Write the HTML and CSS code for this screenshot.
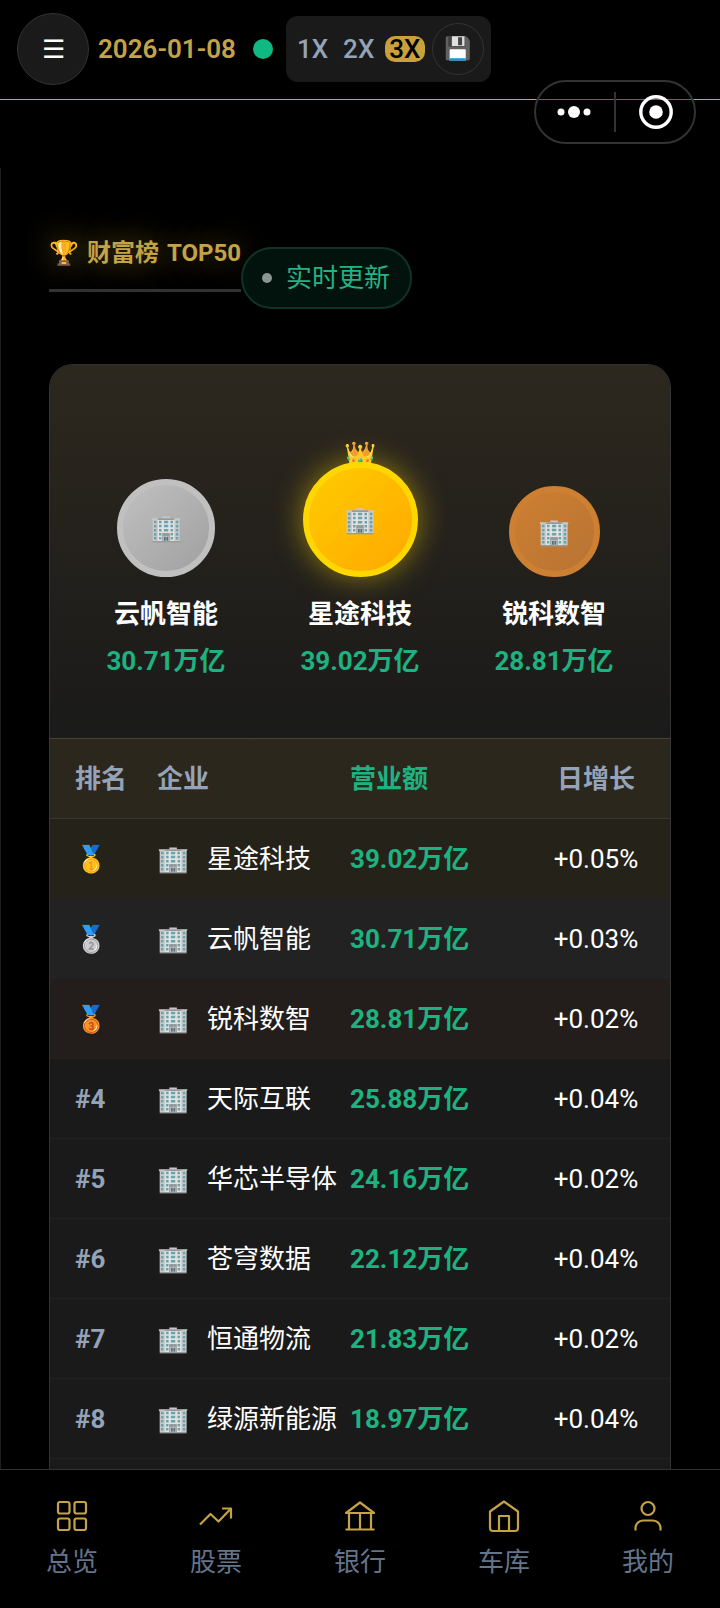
FILE: index.html
```
<!DOCTYPE html>
<html lang="zh-CN">
<head>
    <meta charset="UTF-8">
    <meta name="viewport" content="width=device-width, initial-scale=1.0">
    <title>财富榜 TOP50</title>
    <link rel="stylesheet" href="styles.css">
</head>
<body>
    <header class="topbar">
        <button class="menu-btn" type="button" aria-label="菜单">☰</button>
        <span class="date">2026-01-08</span>
        <span class="status-dot"></span>
        <div class="speed">
            <button class="speed-btn" type="button">1X</button>
            <button class="speed-btn" type="button">2X</button>
            <button class="speed-btn active" type="button">3X</button>
            <button class="save-btn" type="button" aria-label="保存">💾</button>
        </div>
        <div class="capsule">
            <button class="capsule-btn" type="button" aria-label="更多">
                <svg width="40" height="40" viewBox="0 0 40 40" fill="#fff">
                    <circle cx="6" cy="20" r="3.5"/>
                    <circle cx="19" cy="20" r="6"/>
                    <circle cx="32" cy="20" r="3.5"/>
                </svg>
            </button>
            <button class="capsule-btn" type="button" aria-label="关闭">
                <svg width="40" height="40" viewBox="0 0 40 40">
                    <circle cx="21" cy="20" r="15.2" fill="none" stroke="#fff" stroke-width="3.4"/>
                    <circle cx="21" cy="20" r="6.8" fill="#fff"/>
                </svg>
            </button>
        </div>
    </header>

    <main class="content">
        <div class="title-row">
            <h1 class="title"><span>🏆</span> <span>财富榜</span> <span>TOP50</span></h1>
            <span class="live"><span class="live-dot"></span>实时更新</span>
        </div>

        <section class="card">
            <div class="podium">
                <div class="place">
                    <div class="coin silver">🏢</div>
                    <div class="place-name">云帆智能</div>
                    <div class="place-value">30.71万亿</div>
                </div>
                <div class="place">
                    <div class="first-coin">
                        <span class="crown">👑</span>
                        <div class="coin gold">🏢</div>
                    </div>
                    <div class="place-name">星途科技</div>
                    <div class="place-value">39.02万亿</div>
                </div>
                <div class="place">
                    <div class="coin bronze">🏢</div>
                    <div class="place-name">锐科数智</div>
                    <div class="place-value">28.81万亿</div>
                </div>
            </div>

            <table class="rank-table">
                <thead>
                    <tr>
                        <th class="col-rank">排名</th>
                        <th class="col-company">企业</th>
                        <th class="col-revenue">营业额</th>
                        <th class="col-growth">日增长</th>
                    </tr>
                </thead>
                <tbody>
                    <tr class="row-gold">
                        <td class="col-rank">🥇</td>
                        <td><span class="company"><span>🏢</span>星途科技</span></td>
                        <td class="col-revenue">39.02万亿</td>
                        <td class="col-growth">+0.05%</td>
                    </tr>
                    <tr class="row-silver">
                        <td class="col-rank">🥈</td>
                        <td><span class="company"><span>🏢</span>云帆智能</span></td>
                        <td class="col-revenue">30.71万亿</td>
                        <td class="col-growth">+0.03%</td>
                    </tr>
                    <tr class="row-bronze">
                        <td class="col-rank">🥉</td>
                        <td><span class="company"><span>🏢</span>锐科数智</span></td>
                        <td class="col-revenue">28.81万亿</td>
                        <td class="col-growth">+0.02%</td>
                    </tr>
                    <tr>
                        <td class="col-rank">#4</td>
                        <td><span class="company"><span>🏢</span>天际互联</span></td>
                        <td class="col-revenue">25.88万亿</td>
                        <td class="col-growth">+0.04%</td>
                    </tr>
                    <tr>
                        <td class="col-rank">#5</td>
                        <td><span class="company"><span>🏢</span>华芯半导体</span></td>
                        <td class="col-revenue">24.16万亿</td>
                        <td class="col-growth">+0.02%</td>
                    </tr>
                    <tr>
                        <td class="col-rank">#6</td>
                        <td><span class="company"><span>🏢</span>苍穹数据</span></td>
                        <td class="col-revenue">22.12万亿</td>
                        <td class="col-growth">+0.04%</td>
                    </tr>
                    <tr>
                        <td class="col-rank">#7</td>
                        <td><span class="company"><span>🏢</span>恒通物流</span></td>
                        <td class="col-revenue">21.83万亿</td>
                        <td class="col-growth">+0.02%</td>
                    </tr>
                    <tr>
                        <td class="col-rank">#8</td>
                        <td><span class="company"><span>🏢</span>绿源新能源</span></td>
                        <td class="col-revenue">18.97万亿</td>
                        <td class="col-growth">+0.04%</td>
                    </tr>
                </tbody>
            </table>
        </section>
    </main>

    <nav class="tabbar">
        <a class="tab" href="#overview">
            <svg class="tab-icon" viewBox="0 0 40 40">
                <rect x="6" y="6" width="11.5" height="11.5" rx="2"/>
                <rect x="22.5" y="6" width="11.5" height="11.5" rx="2"/>
                <rect x="6" y="22.5" width="11.5" height="11.5" rx="2"/>
                <rect x="22.5" y="22.5" width="11.5" height="11.5" rx="2"/>
            </svg>
            总览
        </a>
        <a class="tab" href="#stock">
            <svg class="tab-icon" viewBox="0 0 40 40">
                <path d="M4 28.5L14.5 18L22.5 25.5L35 12.5"/>
                <path d="M26 12.5H35V22.5"/>
            </svg>
            股票
        </a>
        <a class="tab" href="#bank">
            <svg class="tab-icon" viewBox="0 0 40 40">
                <path d="M6 17L20 6.5L34 17Z"/>
                <path d="M9 17V33.5M20 17V33.5M31 17V33.5M5.5 33.5H34.5"/>
            </svg>
            银行
        </a>
        <a class="tab" href="#garage">
            <svg class="tab-icon" viewBox="0 0 40 40">
                <path d="M6 15.5L20 5.5L34 15.5V32Q34 35 31 35H9Q6 35 6 32Z"/>
                <path d="M15 35V20H25V35"/>
            </svg>
            车库
        </a>
        <a class="tab" href="#mine">
            <svg class="tab-icon" viewBox="0 0 40 40">
                <circle cx="20" cy="12.5" r="6.5"/>
                <path d="M7.5 34.5V32A7.5 7.5 0 0 1 15 24.5H25A7.5 7.5 0 0 1 32.5 32V34.5"/>
            </svg>
            我的
        </a>
    </nav>
</body>
</html>
```
FILE: styles.css
```
* {
    box-sizing: border-box;
}
body {
    margin: 0;
    height: 100vh;
    display: flex;
    flex-direction: column;
    overflow: hidden;
    background: #000;
    color: #fff;
    font-family: Roboto, "Noto Sans CJK SC", sans-serif;
    font-size: 26px;
    line-height: 36px;
}
button {
    padding: 0;
    border: none;
    background: none;
    color: inherit;
    font: inherit;
}

/* top bar */
.topbar {
    position: relative;
    display: flex;
    align-items: center;
    height: 100px;
    padding: 0 17px 2px;
    border-bottom: 1px solid #c9ad4c;
    flex-shrink: 0;
}
.menu-btn {
    width: 72px;
    height: 72px;
    border: 1px solid #333;
    border-radius: 50%;
    background: #1a1a1a;
}
.date {
    margin-left: 9px;
    color: #c4a347;
    font-weight: 600;
}
.status-dot {
    width: 20px;
    height: 20px;
    margin: 0 13px 0 17px;
    border-radius: 50%;
    background: #10b981;
}
.speed {
    display: flex;
    align-items: center;
    gap: 7px;
    height: 66px;
    padding: 0 7px;
    border-radius: 12px;
    background: #1a1a1a;
}
.speed-btn {
    padding: 0 4px;
    border-radius: 10px;
    color: #94a3b8;
    font-weight: 500;
    line-height: 26px;
}
.speed-btn.active {
    background: #c9a13b;
    color: #000;
}
.save-btn {
    width: 52px;
    height: 52px;
    border: 1px solid #333;
    border-radius: 50%;
    font-size: 22px;
}
.capsule {
    position: absolute;
    top: 80px;
    right: 24px;
    display: flex;
    align-items: center;
    width: 162px;
    height: 64px;
    border: 2px solid #333;
    border-radius: 32px;
    background: rgba(0, 0, 0, 0.4);
}
.capsule-btn {
    flex: 1;
    height: 40px;
}
.capsule-btn + .capsule-btn {
    border-left: 2px solid #333;
}
.capsule-btn svg {
    display: block;
    margin: 0 auto;
}

/* content */
.content {
    flex: 1;
    min-height: 0;
    display: flex;
    flex-direction: column;
    margin-top: 68px;
    padding: 67px 49px 0 48px;
    border-left: 1px solid #1f1f1f;
    overflow: hidden;
}
.title-row {
    display: flex;
    align-items: center;
    margin-bottom: 43px;
}
.title {
    display: flex;
    gap: 8px;
    margin: 0 0 29px;
    padding-bottom: 18px;
    border-bottom: 3px solid #333;
    color: #c4a347;
    font-size: 24px;
    font-weight: 700;
    white-space: nowrap;
    text-shadow: 0 0 30px rgba(212, 175, 55, 0.5);
}
.live {
    display: flex;
    align-items: center;
    height: 62px;
    padding: 0 20px 0 19px;
    border: 2px solid #0f3327;
    border-radius: 31px;
    background: #02130d;
    color: #26b184;
}
.live-dot {
    width: 10px;
    height: 10px;
    margin-right: 14px;
    border-radius: 50%;
    background: #8a9692;
}
.card {
    flex: 1;
    min-height: 0;
    border: 1px solid #333;
    border-bottom: none;
    border-radius: 24px 24px 0 0;
    background: #1a1a1a;
    overflow: hidden;
}

/* top three */
.podium {
    display: grid;
    grid-template-columns: repeat(3, 1fr);
    align-items: end;
    padding: 97px 19px 59px;
    background: linear-gradient(180deg, #2d281e, #1a1a1a);
    text-align: center;
}
.coin {
    display: flex;
    align-items: center;
    justify-content: center;
    margin: 0 auto;
    border: 6px solid;
    border-radius: 50%;
}
.silver {
    width: 98px;
    height: 98px;
    border-color: #c0c0c0;
    background: linear-gradient(135deg, #c0c0c0, #a0a0a0);
}
.gold {
    position: relative;
    width: 115px;
    height: 115px;
    border-color: #ffd700;
    background: linear-gradient(135deg, #ffcc00, #ffa800);
    box-shadow: 0 0 30px rgba(255, 215, 0, 0.5);
}
.bronze {
    width: 91px;
    height: 91px;
    border-color: #cd7f32;
    background: linear-gradient(135deg, #cd7f32, #b87333);
}
.first-coin {
    position: relative;
}
.crown {
    position: absolute;
    top: -25px;
    left: 0;
    right: 0;
}
.place-name {
    margin-top: 19px;
    font-weight: 600;
}
.place-value {
    margin-top: 11px;
    color: #1fb281;
    font-weight: 700;
}

/* ranking */
.rank-table {
    width: 100%;
    border-collapse: collapse;
    table-layout: fixed;
}
.rank-table th,
.rank-table td {
    height: 80px;
    padding: 0;
    border-bottom: 1px solid #222;
    text-align: left;
    white-space: nowrap;
}
.rank-table thead th {
    border-top: 1px solid #4b4429;
    border-bottom-color: #37352f;
    background: #2c271d;
    color: #94a3b8;
    font-weight: 600;
}
.rank-table .col-rank {
    width: 107px;
    padding-left: 25px;
    color: #94a3b8;
    font-weight: 700;
}
.rank-table .col-company {
    width: 193px;
}
.rank-table thead .col-revenue,
.rank-table .col-revenue {
    color: #1fb281;
    font-weight: 700;
}
.rank-table .col-growth {
    width: 123px;
    padding-right: 25px;
    text-align: center;
}
.company {
    display: flex;
    gap: 18px;
}
.row-gold {
    background: #25221a;
}
.row-silver {
    background: #222;
}
.row-bronze {
    background: #231e1b;
}

/* bottom tabs */
.tabbar {
    display: flex;
    flex-shrink: 0;
    border-top: 1px solid #333;
    padding: 26px 0 28px;
    background: #000;
}
.tab {
    flex: 1;
    display: flex;
    flex-direction: column;
    align-items: center;
    gap: 8px;
    color: #64748b;
    text-decoration: none;
}
.tab-icon {
    width: 40px;
    height: 40px;
    fill: none;
    stroke: #c4a347;
    stroke-width: 2.2;
    stroke-linejoin: round;
}
```
